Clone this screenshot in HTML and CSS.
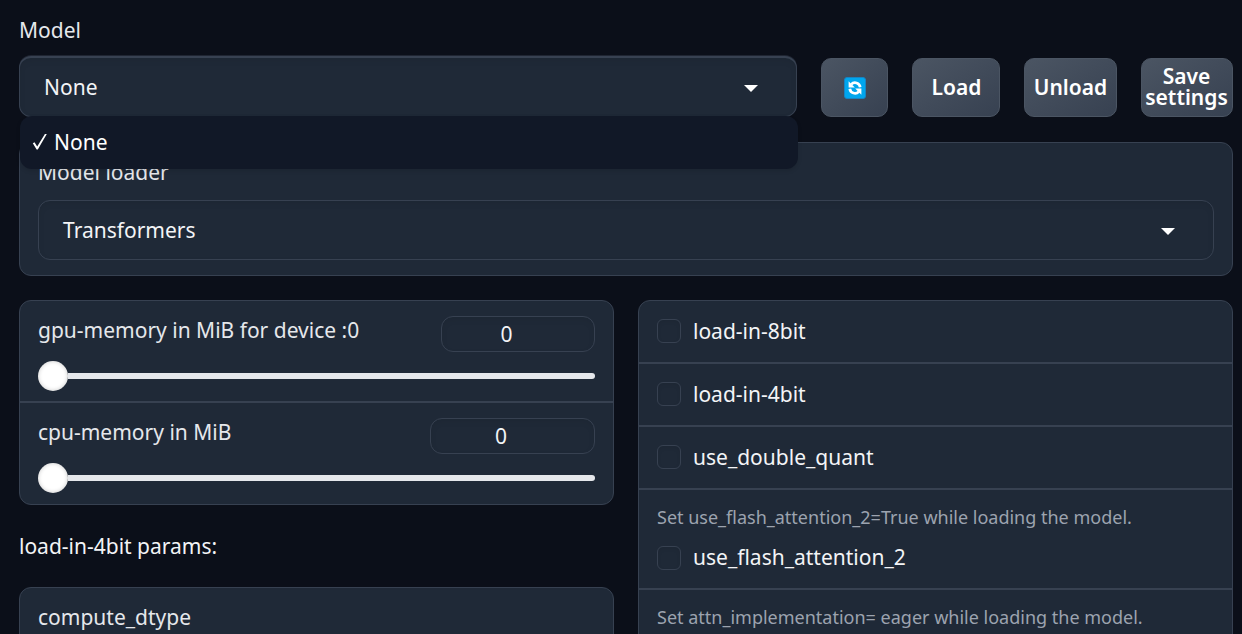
FILE: index.html
```html
<!DOCTYPE html>
<html lang="en">
<head>
<meta charset="utf-8">
<title>Model</title>
<link rel="stylesheet" href="styles.css">
</head>
<body>
<main class="page">
  <div class="model-row">
    <div class="model-field">
      <div class="label">Model</div>
      <div class="select select-open">
        <span>None</span>
        <svg class="caret" width="14" height="7" viewBox="0 0 14 7"><path d="M0 0h14L7 7z" fill="currentColor"/></svg>
        <div class="menu">
          <svg class="check" width="16" height="18" viewBox="0 0 16 18"><path d="M.8 10.2l1.7-1 2.7 4.2L12.9 1h1.9L5.8 16.6H4.6z" fill="currentColor"/></svg>
          <span>None</span>
        </div>
      </div>
    </div>
    <button class="btn btn-refresh" aria-label="Refresh">
      <svg width="22" height="22" viewBox="0 0 22 22">
        <rect x=".5" y=".5" width="21" height="21" rx="2.5" fill="#00a6ed" stroke="#1684c3"/>
        <g fill="none" stroke="#fff" stroke-width="2.7">
          <path d="M7.2 7.4a5.2 5.2 0 0 1 9 2.8"/>
          <path d="M14.8 14.6a5.2 5.2 0 0 1-9-2.8"/>
        </g>
        <path d="M4.6 4.2v6.2h6.2z" fill="#fff"/>
        <path d="M17.4 17.8v-6.2h-6.2z" fill="#fff"/>
      </svg>
    </button>
    <button class="btn btn-load">Load</button>
    <button class="btn btn-unload">Unload</button>
    <button class="btn btn-save">Save settings</button>
  </div>

  <section class="card loader">
    <div class="label">Model loader</div>
    <div class="select">
      <span>Transformers</span>
      <svg class="caret" width="14" height="7" viewBox="0 0 14 7"><path d="M0 0h14L7 7z" fill="currentColor"/></svg>
    </div>
  </section>

  <div class="columns">
    <div class="column">
      <section class="card">
        <div class="slider-row">
          <div class="slider-head"><span class="label">gpu-memory in MiB for device :0</span><span class="number number-gpu">0</span></div>
          <div class="slider"><div class="thumb"></div><div class="track"></div></div>
        </div>
        <div class="slider-row">
          <div class="slider-head"><span class="label">cpu-memory in MiB</span><span class="number number-cpu">0</span></div>
          <div class="slider"><div class="thumb"></div><div class="track"></div></div>
        </div>
      </section>
      <p class="note">load-in-4bit params:</p>
      <section class="card compute"><div class="label">compute_dtype</div></section>
    </div>
    <section class="card options">
      <div class="option"><label class="choice"><span class="box"></span>load-in-8bit</label></div>
      <div class="option"><label class="choice"><span class="box"></span>load-in-4bit</label></div>
      <div class="option"><label class="choice"><span class="box"></span>use_double_quant</label></div>
      <div class="option option-info"><div class="hint">Set use_flash_attention_2=True while loading the model.</div><label class="choice"><span class="box"></span><span class="choice-text">use_flash_attention_2</span></label></div>
      <div class="option option-info"><div class="hint">Set attn_implementation= eager while loading the model.</div></div>
    </section>
  </div>
</main>
</body>
</html>
```
FILE: styles.css
```css
* { box-sizing: border-box; }
body {
  margin: 0;
  height: 634px;
  overflow: hidden;
  background: #0b0f19;
  color: #f3f4f6;
  font: 21px/30px "Noto Sans", sans-serif;
}
.page {
  height: 634px;
  overflow: hidden;
  padding: 15px 9px 0 19px;
}
.label { color: #e5e7eb; }

.model-row { display: flex; align-items: flex-end; gap: 24px; }
.model-field { flex: 1; display: flex; flex-direction: column; gap: 11px; }
.select {
  display: flex;
  align-items: center;
  justify-content: space-between;
  height: 60px;
  padding: 0 38px 0 24px;
  border: 1px solid #374151;
  border-radius: 12px;
  background: #1f2937;
  box-shadow: inset 0 3px 6px rgba(0, 0, 0, .06);
}
.select-open {
  position: relative;
  height: 61px;
  border-top-width: 2px;
  box-shadow: 0 -1px 0 rgba(55, 65, 81, .45), inset 0 3px 6px rgba(0, 0, 0, .06);
}
.caret { color: #fff; margin-top: 2px; }
.menu {
  position: absolute;
  z-index: 2;
  top: 58px;
  left: 0;
  width: 778px;
  height: 53px;
  display: flex;
  align-items: center;
  gap: 6px;
  padding: 0 0 1px 12px;
  border-radius: 12px;
  background: #111827;
  color: #fff;
  box-shadow: 0 2px 4px rgba(0, 0, 0, .12);
}
.btn {
  display: flex;
  align-items: center;
  justify-content: center;
  height: 59px;
  padding: 0;
  border: 1px solid #4b5563;
  border-radius: 10px;
  background: linear-gradient(to bottom right, #4b5563, #374151);
  color: #fff;
  font: 600 21px/21px "Noto Sans", sans-serif;
}
.btn-refresh { width: 67px; }
.btn-load { width: 88px; padding-left: 1px; }
.btn-unload { width: 93px; }
.btn-save { width: 92px; padding: 0 1px 1px 0; }

.card {
  border: 1px solid #374151;
  border-radius: 12px;
  background: #1f2937;
}
.loader { height: 134px; margin-top: 25px; padding: 14px 18px; }
.loader .select { margin-top: 13px; }

.columns {
  display: grid;
  grid-template-columns: 1fr 1fr;
  align-items: start;
  gap: 24px;
  margin-top: 24px;
}
.slider-row { padding: 15px 18px 10px; }
.slider-row + .slider-row { border-top: 2px solid #374151; padding-bottom: 11px; }
.slider-head { display: flex; justify-content: space-between; align-items: flex-start; height: 36px; }
.slider-head .label { margin-top: -1px; }
.number {
  height: 36px;
  padding-right: 23px;
  border: 1px solid #374151;
  border-radius: 12px;
  line-height: 34px;
  text-align: center;
  box-shadow: inset 0 3px 6px rgba(0, 0, 0, .06);
}
.number-gpu { width: 154px; }
.number-cpu { width: 165px; }
.slider { display: flex; align-items: center; margin-top: 9px; }
.thumb {
  width: 30px;
  height: 30px;
  border-radius: 50%;
  background: #fff;
  box-shadow: inset 0 0 4px rgba(0, 0, 0, .22);
}
.track { flex: 1; height: 6px; border-radius: 0 3px 3px 0; background: #e5e7eb; }
.note { margin: 26px 0; }
.compute { height: 134px; padding: 14px 18px; }

.option { padding: 18px 18px 19px; }
.option-info { padding-bottom: 18px; }
.option + .option { border-top: 2px solid #374151; }
.option:last-child { height: 120px; }
.choice { display: flex; align-items: center; gap: 12px; height: 24px; }
.choice-text { padding-bottom: 2px; }
.box {
  width: 24px;
  height: 24px;
  border: 1px solid #374151;
  border-radius: 6px;
  box-shadow: inset 0 2px 4px rgba(0, 0, 0, .06);
}
.hint { margin: -6px 0 14px; color: #9ca3af; font-size: 18px; line-height: 30px; }
```
